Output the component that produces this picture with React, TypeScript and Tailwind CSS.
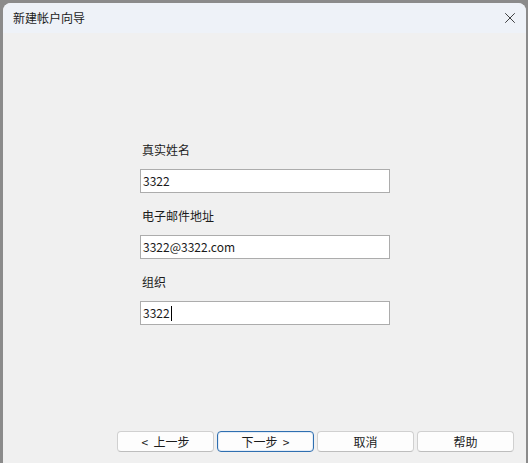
import { X } from 'lucide-react'

const fields = [
  { label: '真实姓名', value: '3322', caret: false },
  { label: '电子邮件地址', value: '3322@3322.com', caret: false },
  { label: '组织', value: '3322', caret: true },
]

const buttons = [
  { text: '<  上一步', primary: false },
  { text: '下一步  >', primary: true },
  { text: '取消', primary: false },
  { text: '帮助', primary: false },
]

const App = () => {
  return (
    <div
      className="flex h-[463px] w-[528px] bg-[#8b8b8b] pl-[3px] pr-[2px] pt-[3px] text-[#1b1b1b]"
      style={{ fontFamily: '"Noto Sans CJK SC", "Noto Sans", sans-serif' }}
    >
      <div className="flex flex-1 flex-col overflow-hidden rounded-t-[8px] bg-[#f0f0f0]">
        <div className="flex h-[30px] items-center justify-between bg-[#eef2f8] pl-[10px] pr-[7px]">
          <span className="text-[12px] leading-none">新建帐户向导</span>
          <X className="h-[18px] w-[18px] text-[#1b1b1b]" strokeWidth={1.1} />
        </div>
        <div className="flex flex-1 flex-col">
          <div className="ml-[137px] mt-[109px] flex w-[250px] flex-col gap-[15px]">
            {fields.map((f) => (
              <div key={f.label} className="flex flex-col">
                <span className="mb-[11px] ml-[2px] text-[12px] leading-[16px]">
                  {f.label}
                </span>
                <div className="flex h-[24px] items-center border border-[#acacac] bg-white px-[2px] text-[12px]">
                  <span className="leading-none">{f.value}</span>
                  {f.caret && (
                    <span className="ml-[1px] h-[15px] w-[1px] bg-black"></span>
                  )}
                </div>
              </div>
            ))}
          </div>
        </div>
        <div className="flex justify-end gap-[3px] pb-[11px] pr-[12px]">
          {buttons.map((b) => (
            <button
              key={b.text}
              type="button"
              className={`flex h-[21px] w-[97px] items-center justify-center whitespace-pre rounded-[4px] bg-[#fdfdfd] text-[12px] leading-none ${
                b.primary
                  ? 'border border-[#2f6fb0] shadow-[inset_0_0_0_1px_#e3ecf7]'
                  : 'border border-[#d0d0d0] border-b-[#bdbdbd]'
              }`}
            >
              {b.text}
            </button>
          ))}
        </div>
      </div>
    </div>
  )
}

export default App
